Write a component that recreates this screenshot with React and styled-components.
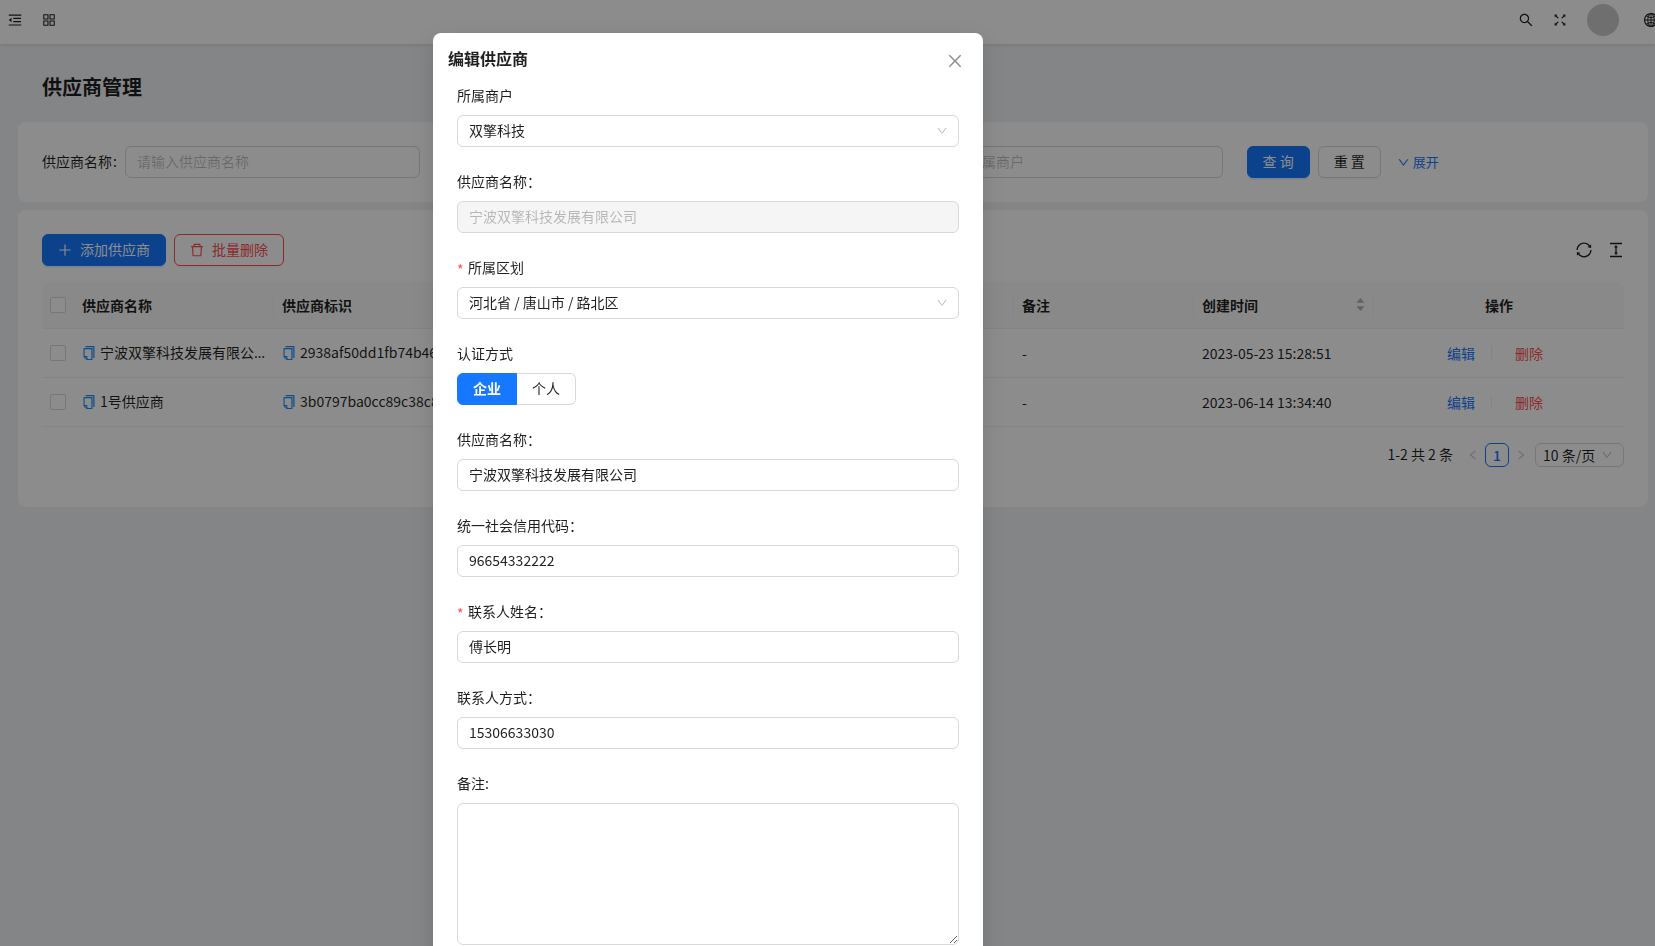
import { useState } from 'react'
import styled, { createGlobalStyle, css } from 'styled-components'
import {
  AiOutlineMenuFold,
  AiOutlineAppstore,
  AiOutlineSearch,
  AiOutlineFullscreen,
  AiOutlineGlobal,
  AiOutlineDown,
  AiOutlinePlus,
  AiOutlineDelete,
  AiOutlineSync,
  AiOutlineColumnHeight,
  AiOutlineLeft,
  AiOutlineRight,
  AiOutlineClose,
  AiFillCaretUp,
  AiFillCaretDown,
} from 'react-icons/ai'

const GlobalStyle = createGlobalStyle`
  * {
    box-sizing: border-box;
  }
  html, body {
    margin: 0;
    height: 100%;
    overflow: hidden;
  }
  body, button, input, select, textarea {
    font-family: "Noto Sans CJK SC", "Noto Sans", sans-serif;
    font-size: 14px;
    line-height: 22px;
    color: rgba(0, 0, 0, 0.88);
  }
  body {
    background: #f0f2f5;
  }
  svg {
    display: block;
    flex: none;
  }
`

const Header = styled.header`
  display: flex;
  align-items: center;
  justify-content: space-between;
  height: 44px;
  padding-left: 7px;
  padding-bottom: 4px;
  background: #fff;
  box-shadow: 0 1px 4px rgba(0, 21, 41, 0.12);
  overflow: hidden;
`
const HeaderGroup = styled.div`
  display: flex;
  align-items: center;
  gap: 18px;
  margin-right: ${({ $pull }) => $pull || '0'};
`
const IconButton = styled.button`
  display: flex;
  padding: 0;
  border: 0;
  background: none;
  cursor: pointer;
  font-size: ${({ $size }) => $size || '14px'};
`
const Avatar = styled.span`
  width: 32px;
  height: 32px;
  margin: 0 6px 0 1px;
  border-radius: 50%;
  background: #cacaca;
`

const Main = styled.main`
  display: flex;
  flex-direction: column;
  gap: 8px;
  padding: 0 7px 0 18px;
`
const PageTitle = styled.h1`
  margin: 0;
  padding: 27px 24px 11px;
  font-size: 20px;
  line-height: 32px;
  font-weight: 600;
`
const Card = styled.section`
  padding: 24px;
  border-radius: 8px;
  background: #fff;
`

const field = css`
  width: 100%;
  height: 32px;
  padding: 3px 11px 5px;
  border: 1px solid #d9d9d9;
  border-radius: 6px;
  background: #fff;
  outline: none;
  &::placeholder {
    color: rgba(0, 0, 0, 0.25);
  }
  &:disabled {
    background: #f5f5f5;
    color: rgba(0, 0, 0, 0.25);
  }
`
const Input = styled.input`
  ${field}
`
const Select = styled.select`
  ${field}
  appearance: none;
  opacity: 1;
`
const TextArea = styled.textarea`
  ${field}
  display: block;
  height: 142px;
  resize: vertical;
`

const SearchForm = styled.form`
  display: grid;
  grid-template-columns: repeat(4, 1fr);
  gap: 24px;
`
const SearchItem = styled.div`
  display: flex;
  align-items: center;
  gap: 8px;
`
const SearchLabel = styled.label`
  padding-bottom: 2px;
  white-space: nowrap;
  &::after {
    content: ':';
    margin-left: 1px;
  }
`
const SearchActions = styled.div`
  display: flex;
  align-items: center;
  gap: 8px;
`
const Button = styled.button`
  display: flex;
  align-items: center;
  justify-content: center;
  gap: 8px;
  height: 32px;
  padding: 3px 15px 5px;
  border: 1px solid #d9d9d9;
  border-radius: 6px;
  background: #fff;
  white-space: nowrap;
  cursor: pointer;
  box-shadow: 0 2px 0 rgba(0, 0, 0, 0.02);
  svg {
    margin-top: 2px;
  }
  ${({ $primary }) =>
    $primary &&
    css`
      border-color: #1677ff;
      background: #1677ff;
      color: #fff;
      box-shadow: 0 2px 0 rgba(5, 145, 255, 0.1);
    `}
  ${({ $danger }) =>
    $danger &&
    css`
      border-color: #ff4d4f;
      color: #ff4d4f;
    `}
`
const Link = styled.a`
  display: inline-flex;
  align-items: center;
  gap: 4px;
  color: ${({ $danger }) => ($danger ? '#ff4d4f' : '#1677ff')};
  text-decoration: none;
`
const ExpandLink = styled(Link)`
  margin-left: 8px;
  gap: 3px;
  font-size: 13px;
`

const Toolbar = styled.div`
  display: flex;
  align-items: center;
  justify-content: space-between;
  margin-bottom: 16px;
`
const ToolbarGroup = styled.div`
  display: flex;
  align-items: center;
  gap: ${({ $gap }) => $gap || '8px'};
`
const Table = styled.table`
  width: 100%;
  table-layout: fixed;
  border-collapse: separate;
  border-spacing: 0;
`
const Th = styled.th`
  position: relative;
  height: 47px;
  padding: 0 8px 1px;
  border-bottom: 1px solid #f0f0f0;
  background: #fafafa;
  font-weight: 600;
  text-align: ${({ $center }) => ($center ? 'center' : 'left')};
  &:first-child {
    border-top-left-radius: 8px;
  }
  &:last-child {
    border-top-right-radius: 8px;
  }
  /* column separator */
  &:not(:first-child):not(:last-child)::after {
    content: '';
    position: absolute;
    top: 12px;
    right: 0;
    width: 1px;
    height: 22px;
    background: #f0f0f0;
  }
`
const Td = styled.td`
  height: 49px;
  padding: 0 8px 1px;
  border-bottom: 1px solid #f0f0f0;
`
const Checkbox = styled.input`
  appearance: none;
  display: block;
  width: 16px;
  height: 16px;
  margin: 0;
  border: 1px solid #d9d9d9;
  border-radius: 2px;
  background: #fff;
`
const CopyCell = styled.div`
  display: flex;
  align-items: center;
  gap: 4px;
`
/* the narrow latin ellipsis leaves room for one more character */
const Ellipsis = styled.span`
  overflow: hidden;
  text-overflow: ellipsis;
  white-space: nowrap;
  font-family: "Noto Sans", sans-serif;
`
const CellText = styled.span`
  font-family: "Noto Sans CJK SC", sans-serif;
`
const SortHead = styled.div`
  display: flex;
  align-items: center;
  justify-content: space-between;
`
const Sorter = styled.span`
  display: flex;
  flex-direction: column;
  color: rgba(0, 0, 0, 0.29);
  font-size: 11px;
  svg + svg {
    margin-top: -3px;
  }
`
const RowActions = styled.div`
  display: flex;
  align-items: center;
  justify-content: center;
  padding-right: 8px;
`
const Divider = styled.span`
  width: 1px;
  height: 13px;
  margin: 0 23px 0 16px;
  background: rgba(5, 5, 5, 0.06);
`

const Pagination = styled.nav`
  display: flex;
  align-items: center;
  justify-content: flex-end;
  padding: 16px 0;
`
const PageButton = styled.button`
  display: flex;
  align-items: center;
  justify-content: center;
  width: 24px;
  height: 24px;
  padding: 0;
  border: 1px solid ${({ $active }) => ($active ? '#1677ff' : 'transparent')};
  border-radius: 6px;
  background: none;
  color: ${({ $active }) => ($active ? '#1677ff' : 'rgba(0, 0, 0, 0.25)')};
  font-weight: 500;
  svg {
    font-size: 12px;
  }
`
const PageTotal = styled.span`
  margin-right: 8px;
  padding-bottom: 2px;
`
const SelectWrap = styled.div`
  display: grid;
  align-items: center;
  > * {
    grid-area: 1 / 1;
  }
  > svg {
    justify-self: end;
    margin-right: 11px;
    font-size: 12px;
    color: rgba(0, 0, 0, 0.25);
    pointer-events: none;
  }
`
const PageSize = styled(SelectWrap)`
  width: 89px;
  margin-left: 2px;
  select {
    height: 24px;
    padding: 0 7px 2px;
  }
`

const Mask = styled.div`
  position: fixed;
  inset: 0;
  display: flex;
  justify-content: center;
  align-items: flex-start;
  padding: 33px 239px 24px 0;
  background: rgba(0, 0, 0, 0.45);
  overflow-y: auto;
  scrollbar-width: none;
`
const Dialog = styled.section`
  width: 550px;
  border-radius: 8px;
  background: #fff;
  box-shadow: 0 6px 16px 0 rgba(0, 0, 0, 0.08),
    0 3px 6px -4px rgba(0, 0, 0, 0.12), 0 9px 28px 8px rgba(0, 0, 0, 0.05);
`
const DialogHeader = styled.div`
  display: flex;
  align-items: center;
  justify-content: space-between;
  padding: 13px 20px 0 15px;
`
const DialogTitle = styled.h2`
  margin: 0;
  font-size: 16px;
  line-height: 24px;
  font-weight: 600;
`
const DialogClose = styled(IconButton)`
  padding-top: 6px;
  color: rgba(0, 0, 0, 0.45);
`
const DialogForm = styled.form`
  display: flex;
  flex-direction: column;
  gap: 23px;
  padding: 14px 24px 24px;
`
const FormItem = styled.div`
  display: flex;
  flex-direction: column;
  gap: 9px;
`
const FormLabel = styled.label`
  display: flex;
`
const Required = styled.span`
  width: 7px;
  height: 22px;
  margin-right: 4px;
  line-height: 26px;
  color: #ff4d4f;
`
const RadioGroup = styled.div`
  display: flex;
`
const RadioButton = styled.label`
  height: 32px;
  padding: 3px 15px 5px;
  border: 1px solid ${({ $checked }) => ($checked ? '#1677ff' : '#d9d9d9')};
  background: ${({ $checked }) => ($checked ? '#1677ff' : '#fff')};
  color: ${({ $checked }) => ($checked ? '#fff' : 'inherit')};
  font-weight: ${({ $checked }) => ($checked ? 600 : 400)};
  cursor: pointer;
  &:first-child {
    border-radius: 6px 0 0 6px;
  }
  &:last-child {
    border-left: 0;
    border-radius: 0 6px 6px 0;
  }
  input {
    appearance: none;
    position: absolute;
    margin: 0;
  }
`

// trims the empty margin that some of the icons carry
const TIGHT = '64 64 896 896'

const suppliers = [
  {
    name: '宁波双擎科技发展有限公司',
    code: '2938af50dd1fb74b46f',
    createdAt: '2023-05-23 15:28:51',
  },
  {
    name: '1号供应商',
    code: '3b0797ba0cc89c38c8',
    createdAt: '2023-06-14 13:34:40',
  },
]

const CopyIcon = () => (
  <svg width="14" height="14" viewBox={TIGHT} aria-hidden="true">
    <path
      fill="#1890ff"
      d="M832 64H296c-4.4 0-8 3.6-8 8v56c0 4.4 3.6 8 8 8h496v688c0 4.4 3.6 8 8 8h56c4.4 0 8-3.6 8-8V96c0-17.7-14.3-32-32-32z"
    />
    <path
      fill="#1890ff"
      d="M704 192H192c-17.7 0-32 14.3-32 32v530.7c0 8.5 3.4 16.6 9.4 22.6l173.3 173.3c2.2 2.2 4.7 4 7.4 5.5v1.9h4.2c3.5 1.3 7.2 2 11 2H704c17.7 0 32-14.3 32-32V224c0-17.7-14.3-32-32-32zM350 856.2L263.9 770H350v86.2zM664 888H414V746c0-22.1-17.9-40-40-40H232V264h432v624z"
    />
    <path fill="#1890ff" fillOpacity="0.45" d="M736 136h56v688h-56z" />
  </svg>
)

const Copyable = ({ children }) => (
  <CopyCell>
    <IconButton aria-label="复制">
      <CopyIcon />
    </IconButton>
    <Ellipsis>
      <CellText>{children}</CellText>
    </Ellipsis>
  </CopyCell>
)

const Field = ({ id, label, required, children }) => (
  <FormItem>
    <FormLabel htmlFor={id}>
      {required && <Required>*</Required>}
      {label}
    </FormLabel>
    {children}
  </FormItem>
)

const SupplierTable = () => (
  <Table>
    <colgroup>
      <col width="32" />
      <col width="200" />
      <col width="200" />
      <col width="540" />
      <col width="180" />
      <col width="180" />
      <col width="250" />
    </colgroup>
    <thead>
      <tr>
        <Th>
          <Checkbox type="checkbox" aria-label="全选" />
        </Th>
        <Th>供应商名称</Th>
        <Th>供应商标识</Th>
        <Th />
        <Th>备注</Th>
        <Th>
          <SortHead>
            创建时间
            <Sorter>
              <AiFillCaretUp />
              <AiFillCaretDown />
            </Sorter>
          </SortHead>
        </Th>
        <Th $center>操作</Th>
      </tr>
    </thead>
    <tbody>
      {suppliers.map(({ name, code, createdAt }) => (
        <tr key={code}>
          <Td>
            <Checkbox type="checkbox" aria-label={name} />
          </Td>
          <Td>
            <Copyable>{name}</Copyable>
          </Td>
          <Td>
            <Copyable>{code}</Copyable>
          </Td>
          <Td />
          <Td>-</Td>
          <Td>{createdAt}</Td>
          <Td>
            <RowActions>
              <Link href="#edit">编辑</Link>
              <Divider />
              <Link href="#delete" $danger>
                删除
              </Link>
            </RowActions>
          </Td>
        </tr>
      ))}
    </tbody>
  </Table>
)

const EditDialog = () => {
  const [type, setType] = useState('企业')
  return (
    <Mask>
      <Dialog role="dialog" aria-labelledby="dialog-title">
        <DialogHeader>
          <DialogTitle id="dialog-title">编辑供应商</DialogTitle>
          <DialogClose $size="16px" aria-label="关闭">
            <AiOutlineClose viewBox={TIGHT} />
          </DialogClose>
        </DialogHeader>
        <DialogForm>
          <Field id="merchant" label="所属商户">
            <SelectWrap>
              <Select id="merchant">
                <option>双擎科技</option>
              </Select>
              <AiOutlineDown />
            </SelectWrap>
          </Field>
          <Field id="supplier" label="供应商名称：">
            <Input id="supplier" disabled value="宁波双擎科技发展有限公司" />
          </Field>
          <Field id="region" label="所属区划" required>
            <SelectWrap>
              <Select id="region">
                <option>河北省 / 唐山市 / 路北区</option>
              </Select>
              <AiOutlineDown />
            </SelectWrap>
          </Field>
          <Field id="type-企业" label="认证方式">
            <RadioGroup>
              {['企业', '个人'].map((item) => (
                <RadioButton key={item} $checked={type === item}>
                  <input
                    id={`type-${item}`}
                    type="radio"
                    name="type"
                    checked={type === item}
                    onChange={() => setType(item)}
                  />
                  {item}
                </RadioButton>
              ))}
            </RadioGroup>
          </Field>
          <Field id="company" label="供应商名称：">
            <Input id="company" defaultValue="宁波双擎科技发展有限公司" />
          </Field>
          <Field id="credit" label="统一社会信用代码：">
            <Input id="credit" defaultValue="96654332222" />
          </Field>
          <Field id="contact" label="联系人姓名：" required>
            <Input id="contact" defaultValue="傅长明" />
          </Field>
          <Field id="phone" label="联系人方式：">
            <Input id="phone" defaultValue="15306633030" />
          </Field>
          <Field id="remark" label="备注:">
            <TextArea id="remark" />
          </Field>
        </DialogForm>
      </Dialog>
    </Mask>
  )
}

const App = () => (
  <>
    <GlobalStyle />
    <Header>
      <HeaderGroup>
        <IconButton $size="16px" aria-label="折叠菜单">
          <AiOutlineMenuFold />
        </IconButton>
        <IconButton $size="16px" aria-label="应用">
          <AiOutlineAppstore />
        </IconButton>
      </HeaderGroup>
      <HeaderGroup $pull="-4px">
        <IconButton $size="16px" aria-label="搜索">
          <AiOutlineSearch />
        </IconButton>
        <IconButton $size="16px" aria-label="全屏">
          <AiOutlineFullscreen />
        </IconButton>
        <Avatar />
        <IconButton $size="16px" aria-label="语言">
          <AiOutlineGlobal />
        </IconButton>
      </HeaderGroup>
    </Header>
    <Main>
      <PageTitle>供应商管理</PageTitle>
      <Card>
        <SearchForm>
          <SearchItem>
            <SearchLabel htmlFor="q-name">供应商名称</SearchLabel>
            <Input id="q-name" placeholder="请输入供应商名称" />
          </SearchItem>
          <div />
          <SearchItem>
            <SearchLabel htmlFor="q-merchant">所属商户</SearchLabel>
            <Input id="q-merchant" placeholder="请输入所属商户" />
          </SearchItem>
          <SearchActions>
            <Button type="button" $primary>
              查 询
            </Button>
            <Button type="button">重 置</Button>
            <ExpandLink href="#expand">
              <AiOutlineDown />
              展开
            </ExpandLink>
          </SearchActions>
        </SearchForm>
      </Card>
      <Card>
        <Toolbar>
          <ToolbarGroup>
            <Button $primary>
              <AiOutlinePlus viewBox={TIGHT} />
              添加供应商
            </Button>
            <Button $danger>
              <AiOutlineDelete viewBox={TIGHT} />
              批量删除
            </Button>
          </ToolbarGroup>
          <ToolbarGroup $gap="16px">
            <IconButton $size="16px" aria-label="刷新">
              <AiOutlineSync viewBox={TIGHT} />
            </IconButton>
            <IconButton $size="16px" aria-label="密度">
              <AiOutlineColumnHeight viewBox={TIGHT} />
            </IconButton>
          </ToolbarGroup>
        </Toolbar>
        <SupplierTable />
        <Pagination>
          <PageTotal>1-2 共 2 条</PageTotal>
          <PageButton aria-label="上一页">
            <AiOutlineLeft />
          </PageButton>
          <PageButton $active>1</PageButton>
          <PageButton aria-label="下一页">
            <AiOutlineRight />
          </PageButton>
          <PageSize>
            <Select aria-label="每页条数">
              <option>10 条/页</option>
            </Select>
            <AiOutlineDown />
          </PageSize>
        </Pagination>
      </Card>
    </Main>
    <EditDialog />
  </>
)

export default App
